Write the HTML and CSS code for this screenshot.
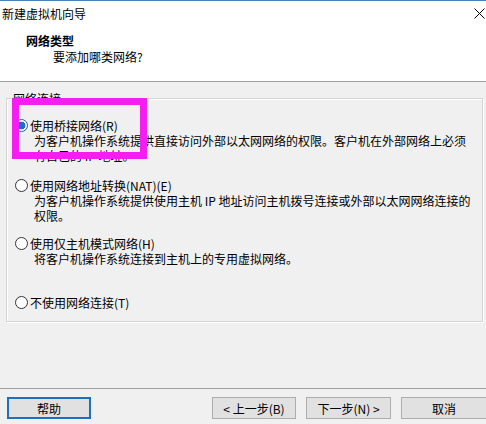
FILE: index.html
```html
<!DOCTYPE html>
<html lang="zh-CN">
<head>
<meta charset="utf-8">
<title>新建虚拟机向导</title>
<link rel="stylesheet" href="styles.css">
</head>
<body>
<div class="window">
  <div class="titlebar">
    <span class="title">新建虚拟机向导</span>
    <svg class="close" width="11" height="11" viewBox="0 0 11 11">
      <path d="M0.5 0.5 L10.5 10.5 M10.5 0.5 L0.5 10.5" stroke="#000" stroke-width="1" fill="none"/>
    </svg>
  </div>
  <div class="header">
    <div class="h-title">网络类型</div>
    <div class="h-sub">要添加哪类网络?</div>
  </div>
  <div class="body">
    <fieldset class="group">
      <legend>网络连接</legend>
      <div class="options">
        <div class="opt">
          <div class="opt-label"><span class="radio checked"></span><span>使用桥接网络(R)</span></div>
          <div class="desc">为客户机操作系统提供直接访问外部以太网网络的权限。客户机在外部网络上必须<br>有自己的 IP 地址。</div>
        </div>
        <div class="opt opt-2">
          <div class="opt-label"><span class="radio"></span><span>使用网络地址转换(NAT)(E)</span></div>
          <div class="desc">为客户机操作系统提供使用主机 IP 地址访问主机拨号连接或外部以太网网络连接的<br>权限。</div>
        </div>
        <div class="opt opt-3">
          <div class="opt-label"><span class="radio"></span><span>使用仅主机模式网络(H)</span></div>
          <div class="desc">将客户机操作系统连接到主机上的专用虚拟网络。</div>
        </div>
        <div class="opt opt-4">
          <div class="opt-label"><span class="radio"></span><span>不使用网络连接(T)</span></div>
        </div>
      </div>
    </fieldset>
  </div>
  <div class="footer">
    <button class="btn btn-default">帮助</button>
    <div class="nav">
      <button class="btn">&lt; 上一步(B)</button>
      <button class="btn btn-next">下一步(N) &gt;</button>
      <button class="btn btn-cancel">取消</button>
    </div>
  </div>
  <div class="highlight"></div>
</div>
</body>
</html>
```

FILE: styles.css
```css
* { box-sizing: border-box; }
html, body { margin: 0; padding: 0; }
body {
  font-family: "Noto Sans CJK SC", "Microsoft YaHei", sans-serif;
  font-size: 12px;
  line-height: 15px;
  color: #000;
  background: #f0f0f0;
}
.window {
  position: relative;
  width: 486px;
  height: 424px;
  overflow: hidden;
  display: flex;
  flex-direction: column;
  border-top: 1px solid #4a82b8;
  background: #f0f0f0;
}
.titlebar {
  height: 25px;
  flex: none;
  display: flex;
  align-items: center;
  justify-content: space-between;
  padding: 0 1px 1px 2px;
  background: #fff;
}
.close { margin-top: 1px; }
.header {
  height: 56px;
  flex: none;
  background: #fff;
  padding: 7px 0 0 0;
  border-bottom: 1px solid #a0a0a0;
}
.h-title {
  font-weight: bold;
  line-height: 16px;
  padding-left: 26px;
}
.h-sub {
  line-height: 16px;
  padding-left: 53px;
}
.body {
  flex: 1;
  padding: 9px 3px 0 6px;
}
.group {
  margin: 0;
  padding: 0;
  border: 1px solid #d5d5d5;
  box-shadow: inset 1px 1px 0 #fff, 1px 1px 0 #fff;
  min-width: 0;
}
.group legend {
  margin-left: 4px;
  padding: 0 2px;
  line-height: 15px;
}
.options {
  padding: 12px 0 11px 8px;
}
.opt-label {
  display: flex;
  align-items: center;
  gap: 2px;
  height: 15px;
}
.opt-2 { margin-top: 15px; }
.opt-3 { margin-top: 13px; }
.opt-4 { margin-top: 29px; }
.radio {
  width: 13px;
  height: 13px;
  border-radius: 50%;
  border: 1px solid #333;
  background: #fff;
  flex: none;
}
.radio.checked {
  border-color: #1d5fa8;
  background: radial-gradient(circle, #1f6fc8 0 3.6px, #fff 4.2px);
}
.desc {
  padding-left: 19px;
}
.footer {
  height: 36px;
  flex: none;
  border-top: 1px solid #a0a0a0;
  padding: 8px 0 0 7px;
  display: flex;
  align-items: flex-start;
}
.nav {
  margin-left: auto;
  display: flex;
  gap: 10px;
  margin-right: -1px;
}
.btn {
  height: 22px;
  width: 84px;
  font: inherit;
  font-size: 12px;
  line-height: 15px;
  color: #000;
  background: #e1e1e1;
  border: 1px solid #adadad;
  padding: 0;
  margin: 0;
}
.btn-default {
  border: 2px solid #1f6fc0;
}
.btn-next { width: 85px; }
.btn-cancel { width: 86px; }
.highlight {
  position: absolute;
  left: 12px;
  top: 97px;
  width: 135px;
  height: 61px;
  border: 7px solid #f41ef0;
}
```
